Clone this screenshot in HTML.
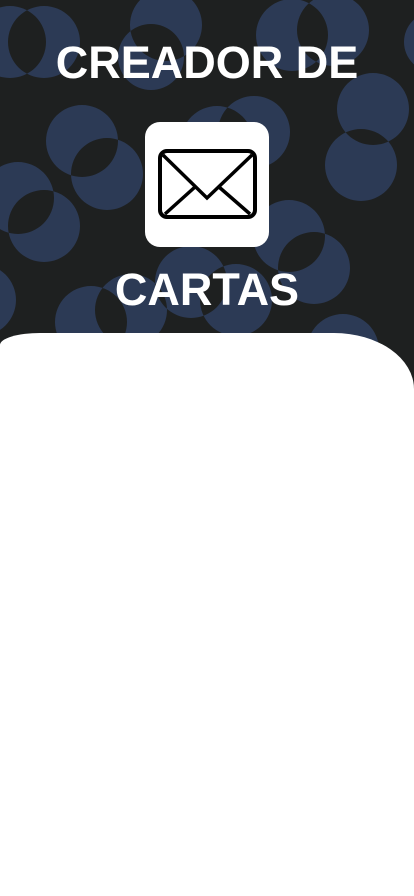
<!DOCTYPE html>
<html><head><meta charset="utf-8"><style>
html,body{margin:0;padding:0;}
body{width:414px;height:896px;overflow:hidden;background:#fff;position:relative;font-family:"Liberation Sans",sans-serif;}
#bg{position:absolute;left:0;top:0;width:414px;height:400px;background:#1e2020;}
svg.bgs{position:absolute;left:0;top:0;}
.t{position:absolute;left:0;width:414px;text-align:center;color:#fff;font-weight:bold;font-size:45px;letter-spacing:0px;}
#box{position:absolute;left:145px;top:122px;width:124px;height:125px;background:#fff;border-radius:15px;}
#white{position:absolute;left:0;top:333px;width:414px;height:563px;background:#fff;border-top-left-radius:40px 12px;border-top-right-radius:80px 56px;}
</style></head><body>
<div id="bg"></div>
<svg class="bgs" width="414" height="400" viewBox="0 0 414 400">
<path fill="#2c3a55" fill-rule="evenodd" d="
M-26,42a36,36 0 1,0 72,0a36,36 0 1,0 -72,0Z
M8,42a36,36 0 1,0 72,0a36,36 0 1,0 -72,0Z
M130,25a36,36 0 1,0 72,0a36,36 0 1,0 -72,0Z
M118,57a33,33 0 1,0 66,0a33,33 0 1,0 -66,0Z
M256,35a36,36 0 1,0 72,0a36,36 0 1,0 -72,0Z
M297,30a36,36 0 1,0 72,0a36,36 0 1,0 -72,0Z
M404,42a30,30 0 1,0 60,0a30,30 0 1,0 -60,0Z
M337,109a36,36 0 1,0 72,0a36,36 0 1,0 -72,0Z
M325,165a36,36 0 1,0 72,0a36,36 0 1,0 -72,0Z
M46,141a36,36 0 1,0 72,0a36,36 0 1,0 -72,0Z
M71,174a36,36 0 1,0 72,0a36,36 0 1,0 -72,0Z
M181,142a36,36 0 1,0 72,0a36,36 0 1,0 -72,0Z
M218,132a36,36 0 1,0 72,0a36,36 0 1,0 -72,0Z
M-18,198a36,36 0 1,0 72,0a36,36 0 1,0 -72,0Z
M8,226a36,36 0 1,0 72,0a36,36 0 1,0 -72,0Z
M253,236a36,36 0 1,0 72,0a36,36 0 1,0 -72,0Z
M278,268a36,36 0 1,0 72,0a36,36 0 1,0 -72,0Z
M155,282a36,36 0 1,0 72,0a36,36 0 1,0 -72,0Z
M200,300a36,36 0 1,0 72,0a36,36 0 1,0 -72,0Z
M55,322a36,36 0 1,0 72,0a36,36 0 1,0 -72,0Z
M95,310a36,36 0 1,0 72,0a36,36 0 1,0 -72,0Z
M-56,300a36,36 0 1,0 72,0a36,36 0 1,0 -72,0Z
M307,350a36,36 0 1,0 72,0a36,36 0 1,0 -72,0Z
"/>
</svg>
<div class="t" style="top:38px;line-height:50px;">CREADOR DE</div>
<div id="box"></div>
<svg class="bgs" width="414" height="400" viewBox="0 0 414 400">
<rect x="160" y="151" width="95" height="66" rx="7" fill="none" stroke="#000" stroke-width="4"/>
<path d="M163,155 L207,198 L252,155 M165,214 L195,187 M219,187 L250,214" fill="none" stroke="#000" stroke-width="3.5"/>
</svg>
<div class="t" style="top:265px;line-height:50px;">CARTAS</div>
<div id="white"></div>
</body></html>
